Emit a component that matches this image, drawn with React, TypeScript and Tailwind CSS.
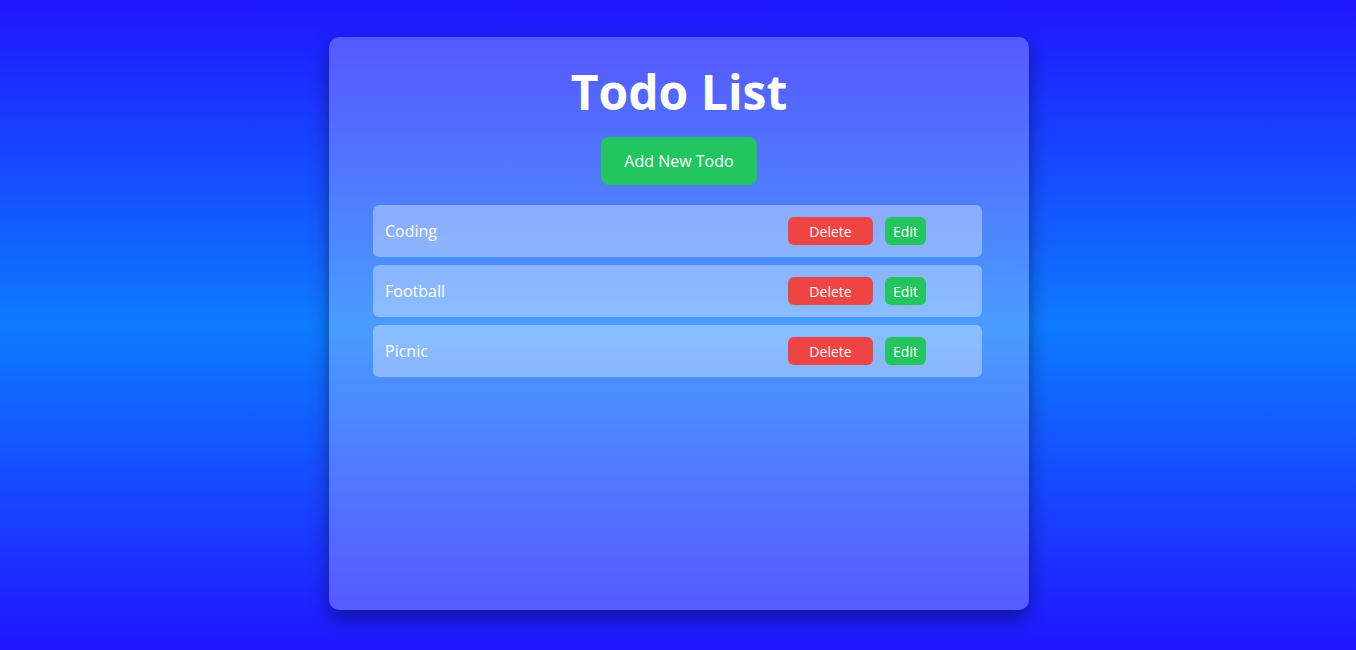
import { useState } from "react";

type Todo = { id: number; text: string };

export default function App() {
  const [todos, setTodos] = useState<Todo[]>([
    { id: 1, text: "Coding" },
    { id: 2, text: "Football" },
    { id: 3, text: "Picnic" },
  ]);

  const addTodo = () => {
    const text = prompt("New todo");
    if (!text) return;
    setTodos([...todos, { id: Date.now(), text }]);
  };

  const removeTodo = (id: number) => setTodos(todos.filter((t) => t.id !== id));

  const editTodo = (id: number) => {
    const text = prompt("Edit todo");
    if (!text) return;
    setTodos(todos.map((t) => (t.id === id ? { ...t, text } : t)));
  };

  return (
    <div
      className="min-h-[650px] w-full flex justify-center bg-[linear-gradient(to_bottom,#2015ff_0%,#0d7bff_50%,#2015ff_100%)]"
      style={{ fontFamily: '"Open Sans", "Noto Sans", sans-serif' }}
    >
      <div className="mt-[37px] ml-[2px] w-[700px] h-[573px] rounded-[10px] bg-white/25 shadow-[0_8px_18px_rgba(0,0,30,0.45)] flex flex-col items-center pt-[24px]">
        <h1 className="text-[48px] leading-[62px] font-bold text-white">
          Todo List
        </h1>
        <button
          onClick={addTodo}
          className="mt-[14px] w-[156px] h-[48px] rounded-lg bg-[#22c55e] text-white text-[16px]"
        >
          Add New Todo
        </button>

        <div className="mt-[20px] w-[609px] ml-[-3px] flex flex-col gap-[8px]">
          {todos.map((todo) => (
            <div
              key={todo.id}
              className="h-[52px] rounded-md bg-white/35 flex items-center pl-[12px] pr-[56px]"
            >
              <span className="flex-1 text-white text-[16px]">{todo.text}</span>
              <button
                onClick={() => removeTodo(todo.id)}
                className="w-[85px] h-[28px] rounded-md bg-[#ef4444] text-white text-[14px]"
              >
                Delete
              </button>
              <button
                onClick={() => editTodo(todo.id)}
                className="ml-[12px] w-[41px] h-[28px] rounded-md bg-[#22c55e] text-white text-[14px]"
              >
                Edit
              </button>
            </div>
          ))}
        </div>
      </div>
    </div>
  );
}
